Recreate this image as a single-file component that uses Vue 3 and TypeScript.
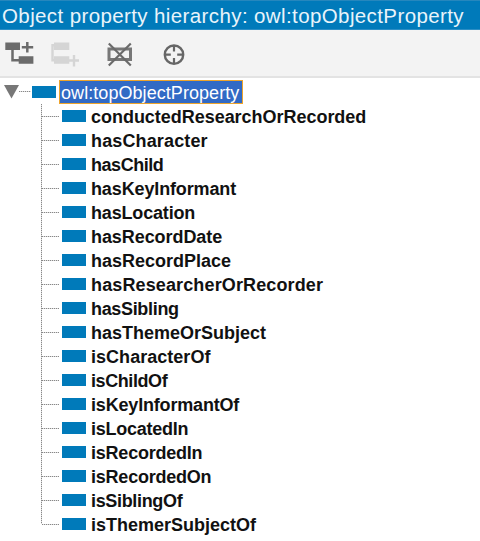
<script setup lang="ts">
interface PropertyNode {
  name: string
  spacing: number
}

const properties: PropertyNode[] = [
  { name: 'conductedResearchOrRecorded', spacing: -0.03 },
  { name: 'hasCharacter', spacing: 0.14 },
  { name: 'hasChild', spacing: -0.45 },
  { name: 'hasKeyInformant', spacing: -0.13 },
  { name: 'hasLocation', spacing: -0.17 },
  { name: 'hasRecordDate', spacing: -0.07 },
  { name: 'hasRecordPlace', spacing: 0 },
  { name: 'hasResearcherOrRecorder', spacing: 0.13 },
  { name: 'hasSibling', spacing: -0.33 },
  { name: 'hasThemeOrSubject', spacing: 0 },
  { name: 'isCharacterOf', spacing: 0.03 },
  { name: 'isChildOf', spacing: -0.42 },
  { name: 'isKeyInformantOf', spacing: -0.18 },
  { name: 'isLocatedIn', spacing: -0.25 },
  { name: 'isRecordedIn', spacing: -0.22 },
  { name: 'isRecordedOn', spacing: -0.22 },
  { name: 'isSiblingOf', spacing: -0.33 },
  { name: 'isThemerSubjectOf', spacing: 0 },
]
</script>

<template>
  <main class="panel">
    <header class="title">Object property hierarchy: owl:topObjectProperty</header>
    <div class="toolbar">
      <svg class="tool" width="30" height="28" viewBox="0 0 30 28">
        <path d="M0.300 1.500h14.700v7.500h-14.700zM13.700 15.300h14.700v7.500h-14.700z" fill="#6b6b6b" />
        <path d="M7.500 8v11.200h7M22.300 1v10.500M16.800 6.300h11.400" fill="none" stroke="#6b6b6b" stroke-width="2.500" />
      </svg>
      <svg class="tool" width="30" height="28" viewBox="0 0 30 28">
        <path d="M3 1.500h15.300v7.500H3zM3 15.300h15.300v7.500H3z" fill="#d5d5d5" />
        <path d="M4 4.300H1.500v15H4M23 14v11.500M17.500 19.500h10.500" fill="none" stroke="#d5d5d5" stroke-width="2.400" />
      </svg>
      <svg class="tool" width="26" height="26" viewBox="0 0 26 26">
        <rect x="2" y="8" width="21.500" height="10.500" fill="none" stroke="#777" stroke-width="3" />
        <path d="M1.800 2.500l22 22M23.800 2.500l-22 22" stroke="#6b6b6b" stroke-width="2.200" />
      </svg>
      <svg class="tool" width="24" height="24" viewBox="0 0 24 24">
        <circle cx="12" cy="11.700" r="9.200" fill="none" stroke="#666" stroke-width="2.400" />
        <path d="M12 2.500v6M12 15v6M2.800 11.700h6M15.200 11.700h6" stroke="#666" stroke-width="2.200" />
      </svg>
    </div>
    <section class="tree">
      <div class="root">
        <svg class="arrow" width="15" height="14" viewBox="0 0 15 14"><path d="M0 0h15L7.500 13.500z" fill="#777" /></svg>
        <i class="dots"></i>
        <i class="marker"></i>
        <span class="selected"><span class="root-name">owl:topObjectProperty</span></span>
      </div>
      <ul class="children">
        <li v-for="node in properties" :key="node.name">
          <i class="dots"></i>
          <i class="marker"></i>
          <span class="name" :style="{ letterSpacing: node.spacing + 'px' }">{{ node.name }}</span>
        </li>
      </ul>
    </section>
  </main>
</template>

<style>
body {
  background: #fff;
}
</style>

<style scoped>
.panel {
  width: 480px;
  height: 541px;
  overflow: hidden;
  background: #fff;
  color: #111;
  font-family: "Liberation Sans", Arial, sans-serif;
}
.title {
  box-sizing: border-box;
  height: 30px;
  padding-left: 2px;
  background: #007aba;
  border-top: 1px solid #2687bd;
  border-bottom: 1px solid #2c8ec5;
  color: #e9f4fa;
  font-size: 20.500px;
  letter-spacing: 0.390px;
  line-height: 29px;
  white-space: nowrap;
}
.toolbar {
  box-sizing: border-box;
  height: 48px;
  display: flex;
  align-items: flex-start;
  padding: 11px 0 0 5px;
  background: #f3f3f3;
  border-bottom: 2px solid #e3e3e3;
}
.tool:nth-child(2) {
  margin-left: 16px;
}
.tool:nth-child(3) {
  margin-left: 26px;
}
.tool:nth-child(4) {
  margin: 2px 0 0 29px;
}
.tree {
  padding-top: 1px;
}
.root {
  height: 25px;
  display: flex;
  align-items: center;
  padding-left: 4px;
}
.dots {
  flex: none;
  height: 1px;
  background: repeating-linear-gradient(90deg, #888 0 1px, #ddd 1px 2px);
}
.root .dots {
  width: 12px;
  margin-right: 1px;
}
.marker {
  flex: none;
  width: 24px;
  height: 12px;
  background: #007aba;
}
.selected {
  box-sizing: border-box;
  width: 184px;
  height: 24px;
  margin-left: 3px;
  border: 1.500px solid #eda42c;
  padding-left: 1px;
  background: #316ac5;
  color: #fff;
  line-height: 24px;
}
.root-name {
  font-size: 18px;
  letter-spacing: 0.060px;
}
.children {
  position: relative;
  margin: 0;
  padding: 0 0 0 42px;
  list-style: none;
}
.children::before {
  content: "";
  position: absolute;
  left: 41px;
  top: 0;
  width: 1px;
  height: 420px;
  background: repeating-linear-gradient(180deg, #888 0 1px, #ddd 1px 2px);
}
.children li {
  height: 24px;
  display: flex;
  align-items: center;
}
.children .dots {
  width: 17px;
  margin-right: 3px;
}
.name {
  margin-left: 5px;
  padding-top: 1px;
  font-size: 18px;
  font-weight: 700;
  line-height: 24px;
  white-space: nowrap;
}
</style>
